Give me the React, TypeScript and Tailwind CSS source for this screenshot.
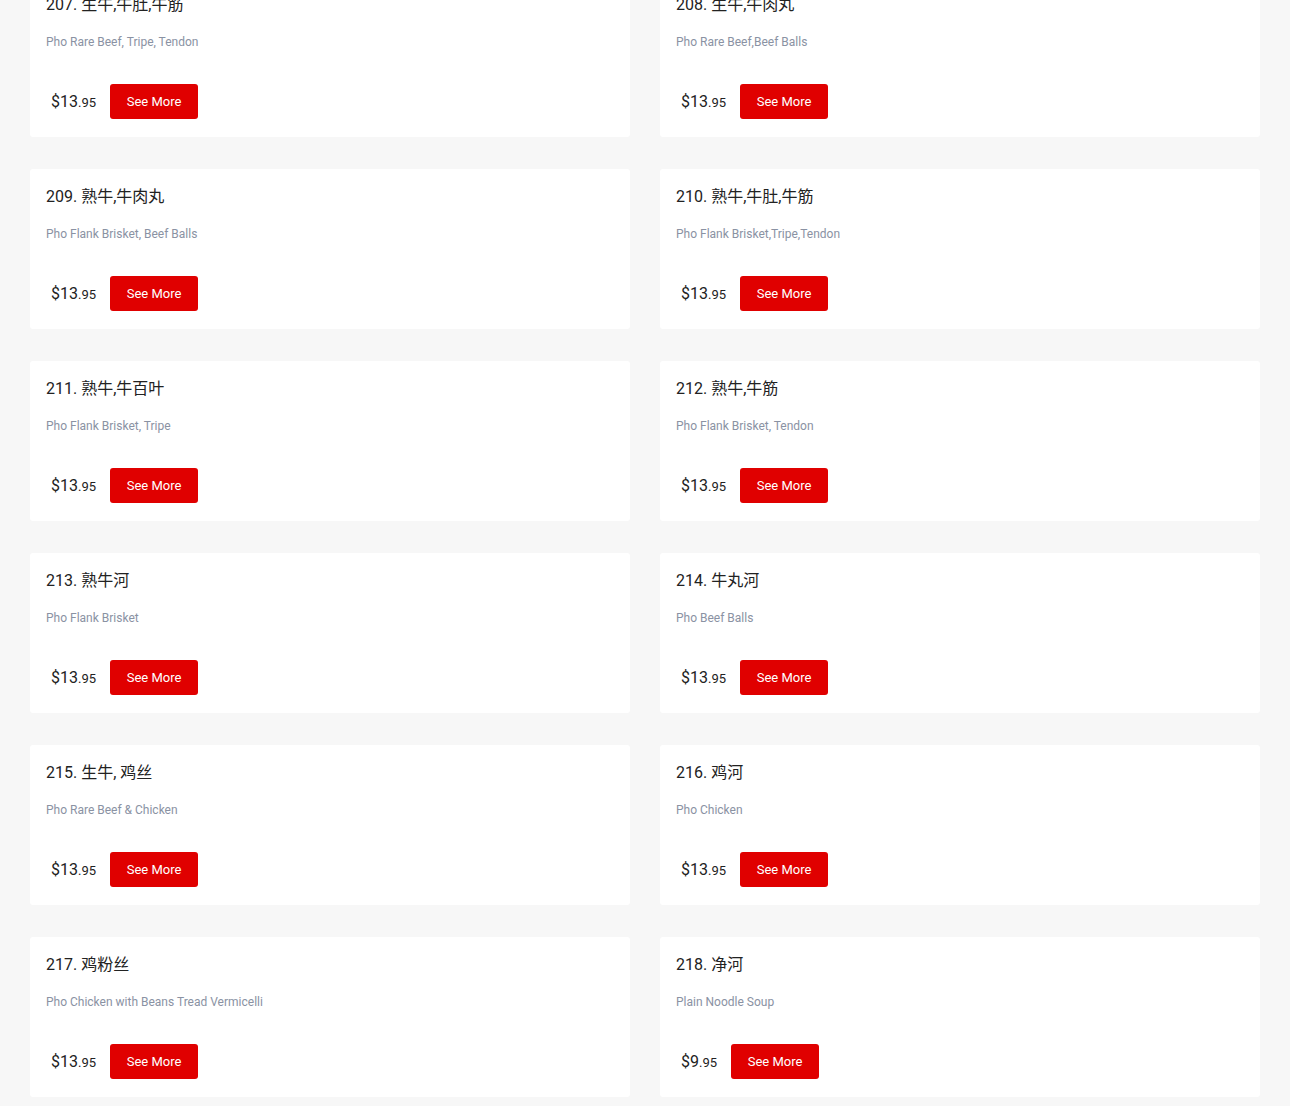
import React from "react";

interface MenuItem {
  no: number;
  zh: string;
  en: string;
  dollars: string;
  cents: string;
}

const items: MenuItem[] = [
  { no: 207, zh: "生牛,牛肚,牛筋", en: "Pho Rare Beef, Tripe, Tendon", dollars: "13", cents: "95" },
  { no: 208, zh: "生牛,牛肉丸", en: "Pho Rare Beef,Beef Balls", dollars: "13", cents: "95" },
  { no: 209, zh: "熟牛,牛肉丸", en: "Pho Flank Brisket, Beef Balls", dollars: "13", cents: "95" },
  { no: 210, zh: "熟牛,牛肚,牛筋", en: "Pho Flank Brisket,Tripe,Tendon", dollars: "13", cents: "95" },
  { no: 211, zh: "熟牛,牛百叶", en: "Pho Flank Brisket, Tripe", dollars: "13", cents: "95" },
  { no: 212, zh: "熟牛,牛筋", en: "Pho Flank Brisket, Tendon", dollars: "13", cents: "95" },
  { no: 213, zh: "熟牛河", en: "Pho Flank Brisket", dollars: "13", cents: "95" },
  { no: 214, zh: "牛丸河", en: "Pho Beef Balls", dollars: "13", cents: "95" },
  { no: 215, zh: "生牛, 鸡丝", en: "Pho Rare Beef & Chicken", dollars: "13", cents: "95" },
  { no: 216, zh: "鸡河", en: "Pho Chicken", dollars: "13", cents: "95" },
  { no: 217, zh: "鸡粉丝", en: "Pho Chicken with Beans Tread Vermicelli", dollars: "13", cents: "95" },
  { no: 218, zh: "净河", en: "Plain Noodle Soup", dollars: "9", cents: "95" },
];

const App: React.FC = () => {
  return (
    <div
      className="min-h-[1106px] bg-[#f7f7f7] overflow-hidden"
      style={{ fontFamily: 'Roboto, "Noto Sans CJK SC", sans-serif' }}
    >
      {/* Menu grid */}
      <div className="grid grid-cols-2 gap-x-[30px] gap-y-[32px] px-[30px] mt-[-23px]">
        {items.map((item) => (
          <MenuCard key={item.no} item={item} />
        ))}
      </div>
    </div>
  );
};

export default App;

/* ------------------ Components ------------------ */

const MenuCard: React.FC<{ item: MenuItem }> = ({ item }) => {
  return (
    <div className="h-[160px] bg-white rounded-[3px] px-4 pt-[17px] pb-[18px] flex flex-col">
      <h3 className="text-base leading-[22px] text-[#222]">
        {item.no}. {item.zh}
      </h3>
      <p className="mt-[18px] text-xs leading-4 text-[#8a92a3]">{item.en}</p>

      {/* Price + action */}
      <div className="mt-auto flex items-center gap-[14px] pl-[5px]">
        <span className="text-[#222] leading-none">
          <span className="text-base">${item.dollars}</span>
          <span className="text-[13px]">.{item.cents}</span>
        </span>
        <button className="h-[35px] w-[88px] flex items-center justify-center rounded-[3px] bg-[#e00000] text-white text-[13px] cursor-pointer">
          See More
        </button>
      </div>
    </div>
  );
};
